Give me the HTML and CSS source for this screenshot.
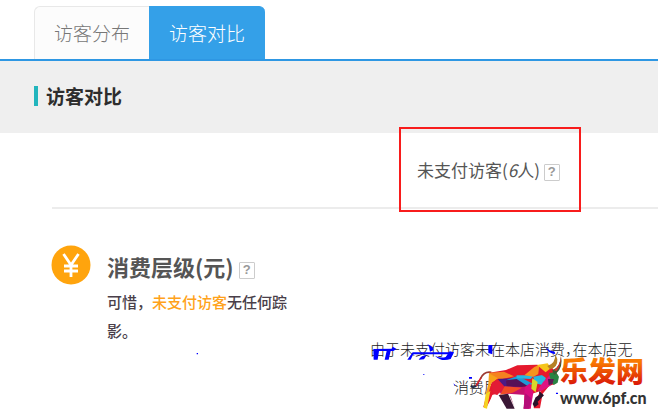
FILE: index.html
```html
<!DOCTYPE html>
<html lang="zh-CN">
  <head>
    <title>访客对比</title>
    <meta charset="utf-8" />
    <link rel="stylesheet" href="styles.css">
  </head>
  <body>
    <nav class="tabs">
      <a class="tab" href="#fenbu">访客分布</a>
      <a class="tab active" href="#duibi">访客对比</a>
    </nav>
    <header class="title-bar">
      <h1>访客对比</h1>
    </header>
    <main>
      <div class="visitors">
        <p class="visitor-box">未支付访客(<em>6</em>人)
          <button class="help" type="button">?</button></p>
      </div>
      <section class="level">
        <svg class="coin" viewBox="0 0 40 40" width="40" height="40">
          <circle cx="20" cy="20" r="19.5" fill="#ffa40d" />
          <path d="M12.500 9l7.500 11 7.500-11M20 19v13M13 21h14M13 26h14" fill="none" stroke="#fff" stroke-width="2.800" />
        </svg>
        <div class="summary">
          <h2>消费层级(元) <button class="help" type="button">?</button></h2>
          <p>可惜，<strong>未支付访客</strong>无任何踪影。</p>
        </div>
        <div class="reason">
          <p>由于未支付访客未在本店消费，在本店无</p>
          <p class="rest">消费层</p>
        </div>
      </section>
    </main>
    <svg class="watermark" viewBox="190 340 468 80" width="468" height="80">
      <defs>
        <linearGradient id="fire" x1="0" y1="0" x2="0" y2="1">
          <stop offset="0.300" stop-color="#f97a00" />
          <stop offset="0.900" stop-color="#d81208" />
        </linearGradient>
      </defs>
      <g transform="translate(350 325) scale(0.3333)">
        <!-- blue strokes -->
        <g fill="#00f">
          <path d="M70 72l55-1 3-6 12 7-10 6H122l-6 26h-12l6-26H87l-4 26H71z" />
          <path d="M188 82h118v6H190l-8 16h-10z" />
          <path d="M232 58q18 4 18 18l-10 4q0-14-8-22zM206 104q8-13 24-13l-8 12zM255 92q18 9 32 4l12-17 13 3-10 20q-28 10-47-10z" />
          <path d="M415 60h12v28l-12-4zM586 65l12 11 16 4 2 7q-20 0-30-22z" />
          <path d="M357 156h9v5h-9zM310 175l6 5-2 3zM618 203h6v4h-6zM220 147h3v3h-3zM-460 84h4v4h-4z" />
        </g>
        <!-- bull -->
        <g fill="none" stroke-width="5">
          <path d="M362 183q12 9 20-6" stroke="#1c2a48" />
          <path d="M378 182q8-10 15-24" stroke="#d8202c" />
          <path d="M392 160q10-22 32-18" stroke="#9c3b32" />
        </g>
        <path d="M418 143l50-8 34-14 58-2 44 6 20 26-8 26-18 5-20 24-8 44h-50l2-45-25-5h-42l-28 10-15 40-12-4 10-38 16-36z" fill="#e5192d" />
        <path d="M470 210l12 4 12 36h-9z" fill="#b3225d" />
        <path d="M428 213l30-12-10 8-34 42h-7z" fill="#fff" />
        <path d="M496 205h28l-2 46h-54l-22-40 30-4 20 43 26 1z" fill="#fff" />
        <path d="M446 210l28-4 20 45h-24z" fill="#3a1735" />
        <path d="M546 206l26-8-22 38 2 16h-10z" fill="#fff" />
        <path d="M567 198l15 13-19 19 3 8-12 9-6-10 9-20 11-7z" fill="#29142b" />
        <path d="M418 143l44-3 30 14-34 8-36-2z" fill="#f58220" />
        <path d="M417 145l27 15-20 15-10 36-7-3 8-31z" fill="#f7a21b" />
        <path d="M407 206l14-8-10 53-10-3z" fill="#f5d421" />
        <path d="M425 174l20-12 21 22-24 26-14-4z" fill="#e31b35" />
        <path d="M443 162l55-3 4 30-38-4z" fill="#4b1a86" />
        <path d="M468 166l36-14 44 24-14 8-34-3z" fill="#1e9ad6" />
        <path d="M468 166l32-4 34 22-26 3-38-3z" fill="#571057" />
        <path d="M465 185l66 1 17 17-20 7-80-5z" fill="#c5126e" />
        <path d="M464 184l52 4-28 15-38 6z" fill="#f04c26" />
        <path d="M524 187l16-12 10 28-8 48h-20z" fill="#d90d80" />
        <path d="M526 205l18 15-6 31h-18z" fill="#b50e79" />
        <path d="M500 151h52l-10 11-42-2z" fill="#26b9e3" />
        <path d="M523 151l30-25 15-7-3 28-14 8z" fill="#f7941d" />
        <path d="M550 155l42-8-12 34-25-6z" fill="#28b8df" />
        <path d="M547 160l16 11-6 31-13-11z" fill="#d8d92a" />
        <path d="M565 145l22-20 14 18-10 18-12-9z" fill="#e8192c" />
        <path d="M561 120l32-5 10 14-16 13z" fill="#f5c51b" />
        <path d="M580 170l20-20 12 14-11 18-28 16-10-3z" fill="#df1482" />
        <path d="M597 145l20-5 10 15-4 18-12 7-8-11z" fill="#298444" />
        <path d="M594 162h18l-5 15-11 3z" fill="#5a1b56" />
        <path d="M592 123q25-7 24-35l6 14q2 26-22 31z" fill="#b58124" />
        <path d="M607 136q24-8 26-43 7 32-13 51l-8 6z" fill="#3f5a35" />
        <path d="M611 136q18-8 22-43 2 26-13 45z" fill="#d3342c" />
      </g>
      <text class="brand" x="560" y="382" fill="url(#fire)">乐发网</text>
      <text class="site" x="560" y="404">www.6pf.cn</text>
    </svg>
  </body>
</html>
```

FILE: styles.css
```css
body {
  margin: 0;
  font-family: "Noto Sans CJK SC", sans-serif;
  background: #fff;
  color: #555;
}

h1, h2, p {
  margin: 0;
}

.tabs {
  display: flex;
  padding: 6px 0 0 34px;
  border-bottom: 2px solid #2e97e3;
}

.tab {
  box-sizing: border-box;
  height: 53px;
  padding: 0 19px;
  border: 1px solid #e8e8e8;
  border-width: 1px 0 0 1px;
  border-radius: 6px 0 0 0;
  background: #fcfcfc;
  color: #777;
  font-size: 19px;
  font-weight: 300;
  line-height: 52px;
  text-decoration: none;
}

.tab.active {
  padding-right: 20px;
  border-color: #34a0e8;
  border-radius: 0 6px 0 0;
  background: #34a0e8;
  color: #fff;
}

.title-bar {
  padding: 25px 34px 27px;
  background: #efefef;
}

h1 {
  padding-left: 8px;
  border-left: 4px solid #22b5bd;
  color: #2d2d2d;
  font-size: 19px;
  line-height: 20px;
}

.visitors {
  display: flex;
  justify-content: flex-end;
  margin-left: 52px;
  padding-right: 77px;
  height: 74px;
  border-bottom: 2px solid #ececec;
}

.visitor-box {
  box-sizing: border-box;
  width: 182px;
  height: 85px;
  margin-top: -6px;
  padding-left: 16px;
  border: 2px solid #f81c1c;
  font-size: 17px;
  line-height: 82px;
}

.help {
  width: 16px;
  height: 17px;
  padding: 0;
  border: 1px solid #ccc;
  border-radius: 1px;
  background: #fff;
  color: #999;
  font: bold 13px/14px "Liberation Sans", sans-serif;
  vertical-align: 1px;
}

.level {
  display: flex;
  gap: 16px;
  padding: 36px 0 0 51px;
}

.coin {
  flex: none;
}

.summary {
  flex: none;
  width: 190px;
}

h2 {
  font-size: 22px;
  line-height: 42px;
}

h2 .help {
  vertical-align: 2px;
}

.summary p {
  color: #4a3f4a;
  font-size: 15px;
  font-weight: 500;
  line-height: 29px;
}

.summary strong {
  color: #ffa21a;
  font-weight: 500;
}

.reason {
  padding: 85px 0 0 57px;
  color: #222;
  font-size: 15px;
  font-weight: 300;
  font-feature-settings: "halt";
  line-height: 38px;
  white-space: nowrap;
}

.rest {
  padding-left: 84px;
}

.watermark {
  position: absolute;
  top: 340px;
  left: 190px;
  pointer-events: none;
}

.brand {
  font-size: 28px;
  font-weight: 900;
}

.site {
  fill: #333;
  font: 900 16px Lato, sans-serif;
}
```
